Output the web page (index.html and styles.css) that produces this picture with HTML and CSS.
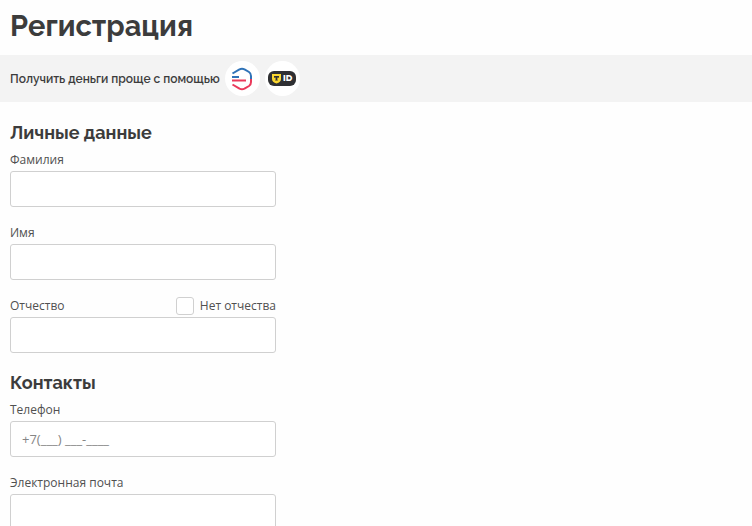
FILE: index.html
```
<!DOCTYPE html>
<html lang="ru">
<head>
    <meta charset="UTF-8">
    <meta name="viewport" content="width=device-width, initial-scale=1.0">
    <title>Регистрация</title>
    <link rel="stylesheet" href="styles.css">
</head>
<body>
    <h1>Регистрация</h1>

    <div class="quick">
        <span class="quick-text">Получить деньги проще с помощью</span>
        <button type="button" class="round" aria-label="Госуслуги">
            <svg width="22" height="24" viewBox="0 0 22 24" fill="none" stroke-width="2" stroke-linejoin="round">
                <path stroke="#2f73b8" d="M1.500 6.500 L8.500 2.300 Q11 1 13.500 2.300 L18 5 Q20 6.300 20 9 V12 M1 10 H8"/>
                <path stroke="#ea3a5b" d="M20 12 V15 Q20 17.700 18 19 L13.500 21.700 Q11 23 8.500 21.700 L1.500 17.500 M1 13.500 H15"/>
            </svg>
        </button>
        <button type="button" class="round" aria-label="T-ID">
            <svg width="28" height="15" viewBox="0 0 28 15">
                <rect x="0" y="0" width="28" height="15" rx="6" fill="#2f3033"/>
                <path fill="#fbd72f" d="M4 3 H13 V8 Q13 11 8.500 12.500 Q4 11 4 8 Z"/>
                <path fill="#2f3033" d="M6 5 H11 V6.800 L9.400 6.400 V8.800 L10 9.500 H7 L7.600 8.800 V6.400 L6 6.800 Z"/>
                <text x="15" y="10" class="id-text">ID</text>
            </svg>
        </button>
    </div>

    <form>
        <section>
            <h2>Личные данные</h2>
            <div class="field">
                <label for="surname">Фамилия</label>
                <input type="text" id="surname" name="surname">
            </div>
            <div class="field">
                <label for="name">Имя</label>
                <input type="text" id="name" name="name">
            </div>
            <div class="field">
                <div class="label-row">
                    <label for="patronymic">Отчество</label>
                    <label class="check" for="nopatronymic">
                        <input type="checkbox" id="nopatronymic" name="nopatronymic">
                        Нет отчества
                    </label>
                </div>
                <input type="text" id="patronymic" name="patronymic">
            </div>
        </section>

        <section>
            <h2>Контакты</h2>
            <div class="field">
                <label for="phone">Телефон</label>
                <input type="tel" id="phone" name="phone" placeholder="+7(___) ___-____">
            </div>
            <div class="field">
                <label for="email">Электронная почта</label>
                <input type="email" id="email" name="email">
            </div>
        </section>
    </form>
</body>
</html>
```
FILE: styles.css
```
* {
    box-sizing: border-box;
}
body {
    margin: 0;
    background-color: #fefefe;
    font-family: "Open Sans", "Noto Sans", sans-serif;
    font-size: 12px;
    line-height: 18px;
    color: #505050;
}
h1, h2, .quick-text {
    font-family: Raleway, Montserrat, "Open Sans", sans-serif;
    color: #3c3c3c;
}
h1 {
    margin: 0;
    padding: 6px 10px 9px;
    font-size: 29px;
    font-weight: 700;
    line-height: 40px;
}
h2 {
    margin: 0 0 6px;
    font-size: 18px;
    font-weight: 700;
    line-height: 24px;
}
.quick {
    display: flex;
    align-items: center;
    gap: 5px;
    padding: 6px 10px;
    background-color: #f3f3f3;
}
.quick-text {
    font-size: 12px;
    font-weight: 600;
}
.round {
    display: flex;
    align-items: center;
    justify-content: center;
    width: 35px;
    height: 35px;
    padding: 0;
    border: none;
    border-radius: 50%;
    background-color: #fff;
    cursor: pointer;
}
.id-text {
    font-family: Montserrat, Inter, sans-serif;
    font-size: 8px;
    font-weight: 800;
    fill: #fff;
}
form {
    max-width: 286px;
    padding: 19px 10px;
}
section {
    margin-bottom: 18px;
}
.field {
    display: flex;
    flex-direction: column;
    gap: 2px;
}
.field + .field {
    margin-top: 17px;
}
.label-row {
    display: flex;
    justify-content: space-between;
}
.check {
    display: flex;
    align-items: center;
    gap: 6px;
}
.field input {
    height: 36px;
    margin: 0;
    padding: 0 11px;
    border: 1px solid #d0d0d0;
    border-radius: 3px;
    background-color: #fff;
    font-family: inherit;
    font-size: 13px;
    color: #3c3c3c;
}
.field input::placeholder {
    color: #858585;
    opacity: 1;
}
.field .check input {
    appearance: none;
    width: 18px;
    height: 18px;
    padding: 0;
}
.field .check input:checked {
    background-color: #505050;
}
```
